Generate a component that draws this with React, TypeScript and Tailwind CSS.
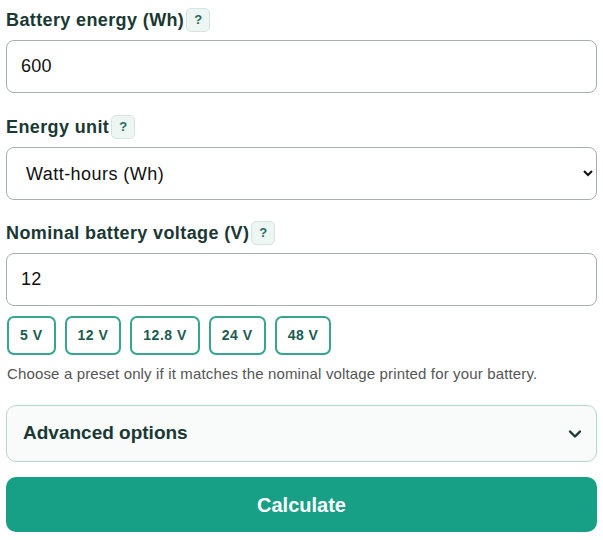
import { useState } from "react";

const presets = ["5 V", "12 V", "12.8 V", "24 V", "48 V"];

function HelpBadge() {
  return (
    <span className="ml-[2px] inline-flex h-6 w-6 items-center justify-center rounded-[5px] border border-[#d5e4e0] bg-[#eef6f4] text-[13px] font-bold tracking-normal text-[#1d6a5e]">
      ?
    </span>
  );
}

function FieldLabel({ text, htmlFor }: { text: string; htmlFor: string }) {
  return (
    <label
      htmlFor={htmlFor}
      className="flex h-6 items-center text-[18px] font-bold tracking-[0.38px] text-[#1a3834]"
    >
      {text}
      <HelpBadge />
    </label>
  );
}

export default function App() {
  const [energy, setEnergy] = useState("600");
  const [unit, setUnit] = useState("wh");
  const [voltage, setVoltage] = useState("12");

  const inputClass =
    "h-[53px] w-full rounded-[8px] border border-[#a3b0ad] bg-white px-[14px] text-[18px] tracking-[0.3px] text-[#111] outline-none";

  return (
    <div className="min-h-screen bg-white px-[6px] pt-[8px] font-['Liberation_Sans',Arial,sans-serif]">
      <div className="mb-[22px] flex flex-col gap-[8px]">
        <FieldLabel text="Battery energy (Wh)" htmlFor="energy" />
        <input id="energy" className={inputClass} value={energy} onChange={(e) => setEnergy(e.target.value)} />
      </div>

      <div className="mb-[21px] flex flex-col gap-[8px]">
        <FieldLabel text="Energy unit" htmlFor="unit" />
        <select
          id="unit"
          className="h-[53px] w-full rounded-[8px] border border-[#a3b0ad] bg-white pl-[15px] pr-[8px] text-[18px] tracking-[0.45px] text-[#111] outline-none"
          value={unit}
          onChange={(e) => setUnit(e.target.value)}
        >
          <option value="wh">Watt-hours (Wh)</option>
          <option value="kwh">Kilowatt-hours (kWh)</option>
          <option value="ah">Amp-hours (Ah)</option>
        </select>
      </div>

      <div className="flex flex-col gap-[8px]">
        <FieldLabel text="Nominal battery voltage (V)" htmlFor="voltage" />
        <input id="voltage" className={inputClass} value={voltage} onChange={(e) => setVoltage(e.target.value)} />
      </div>

      <div className="mt-[10px] flex gap-[9px] pl-px">
        {presets.map((p) => (
          <button
            key={p}
            onClick={() => setVoltage(p.replace(" V", ""))}
            className="h-[39px] rounded-[7px] border-2 border-[#34a78e] bg-white px-[11px] text-[14px] font-bold tracking-[0.5px] text-[#1b5a52]"
          >
            {p}
          </button>
        ))}
      </div>

      <p className="mt-[10px] pl-px text-[15px] leading-[18px] tracking-[0.15px] text-[#555]">
        Choose a preset only if it matches the nominal voltage printed for your battery.
      </p>

      <details className="mt-[22px] rounded-[10px] border border-[#b6d7cf] bg-[#f8fbfa]">
        <summary className="flex h-[55px] cursor-pointer list-none items-center justify-between pl-[16px] pr-[14px] text-[19px] font-bold text-[#1a3834]">
          Advanced options
          <svg width="14" height="10" viewBox="0 0 14 10" fill="none">
            <path d="M2 2.5l5 5 5-5" stroke="#1a3834" strokeWidth="2.4" strokeLinecap="round" strokeLinejoin="round" />
          </svg>
        </summary>
      </details>

      <button className="mt-[15px] h-[55px] w-full rounded-[10px] bg-[#17a085] text-[20px] font-bold text-white">
        Calculate
      </button>
    </div>
  );
}
